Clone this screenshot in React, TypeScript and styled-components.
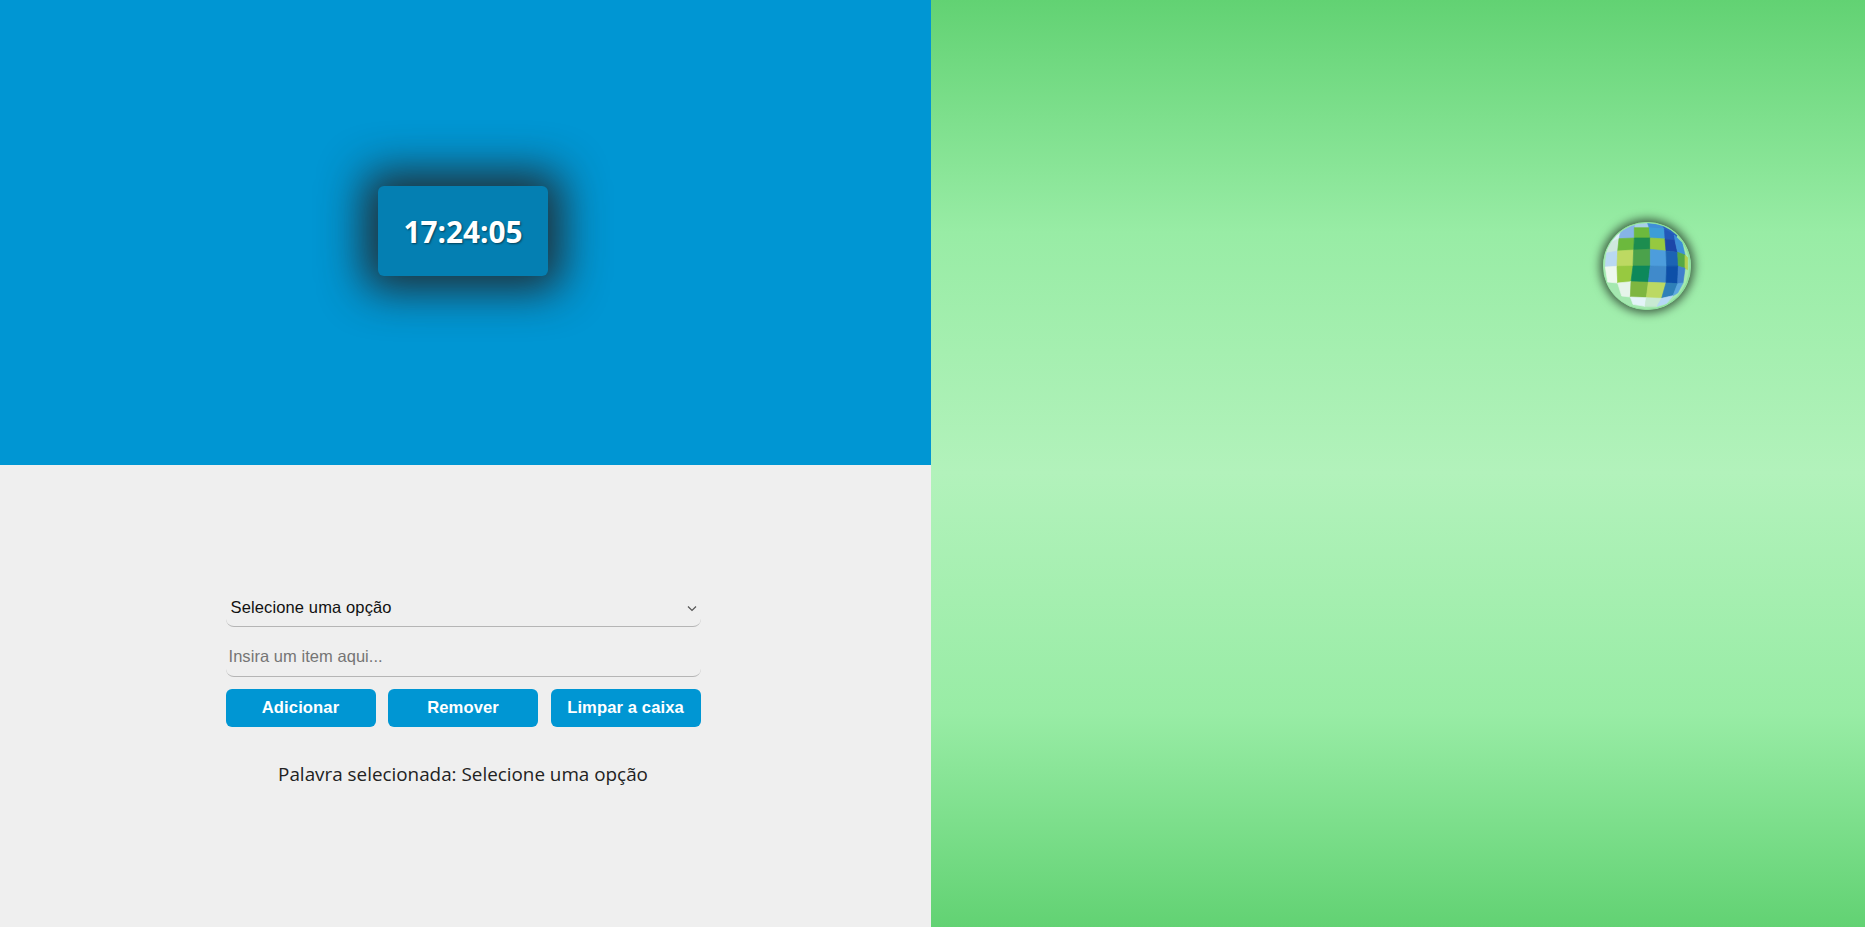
import React from "react";
import styled, { createGlobalStyle } from "styled-components";

const Global = createGlobalStyle`
  html, body { margin: 0; padding: 0; height: 100%; overflow: hidden; }
  #root { height: 100%; }
  * { box-sizing: border-box; }
`;
const Page = styled.div`
  display: grid;
  grid-template-columns: 931px 1fr;
  width: 1865px;
  height: 927px;
`;
const LeftColumn = styled.div`
  display: grid;
  grid-template-rows: 465px 1fr;
`;
const ClockPanel = styled.section`
  background: #0096d3;
  display: flex;
  align-items: center;
  justify-content: center;
  padding: 0 5px 3px 0;
`;
const ClockCard = styled.div`
  width: 170px;
  height: 90px;
  background: #047fb2;
  border-radius: 6px;
  box-shadow: 0 0 44px 14px rgba(34, 40, 44, 0.95);
  display: flex;
  align-items: center;
  justify-content: center;
  color: #fff;
  font: 700 29.8px "Open Sans", sans-serif;
  text-shadow: 1px 1px 2px rgba(0, 0, 0, 0.5);
`;
const FormPanel = styled.section`
  background: #efefef;
  display: flex;
  flex-direction: column;
  align-items: center;
  padding: 126px 5px 0 0;
`;
const Form = styled.div`
  width: 475px;
  display: flex;
  flex-direction: column;
`;
const SelectBox = styled.div`
  height: 36px;
  display: flex;
  align-items: center;
  justify-content: space-between;
  padding: 0 3px 2px 5px;
  border-bottom: 1px solid #b5b5b5;
  border-radius: 0 0 8px 8px;
  font: 16.5px "Liberation Sans", sans-serif;
  letter-spacing: 0.13px;
  color: #111;
`;
const TextField = styled.input`
  height: 40px;
  margin-top: 10px;
  padding: 0 3px 0 3px;
  border: 0;
  border-bottom: 1px solid #b5b5b5;
  border-radius: 0 0 8px 8px;
  background: transparent;
  font: 16.5px "Liberation Sans", sans-serif;
  letter-spacing: 0.05px;
  outline: none;
  &::placeholder { color: #757575; opacity: 1; }
`;
const ButtonRow = styled.div`
  display: grid;
  grid-template-columns: repeat(3, 150px);
  justify-content: space-between;
  margin-top: 12px;
`;
const ActionButton = styled.button`
  height: 38px;
  border: 0;
  border-radius: 6px;
  background: #0096d3;
  color: #fff;
  font: 700 16.6px "Liberation Sans", sans-serif;
  letter-spacing: 0.1px;
`;
const Selection = styled.p`
  margin: 34px 0 0;
  text-align: center;
  font: 18.85px "Open Sans", sans-serif;
  color: #222;
`;
const RightPanel = styled.section`
  background: linear-gradient(180deg, #62d273 0%, #98eca5 25%, #b2f2bb 51%, #98eca5 77%, #62d273 100%);
  display: flex;
  align-items: flex-start;
  justify-content: flex-end;
  padding: 222px 174px 0 0;
`;
const Globe = styled.svg`
  width: 88px;
  height: 88px;
  border-radius: 50%;
  box-shadow: 0 0 10px 3px rgba(0, 0, 0, 0.6);
`;

/* Quads in a 3x working space, the sphere being centred on (148,155). */
const cells: [string, string][] = [
  ["M110 30 L150 27 L155 42 L110 44Z", "#a8cfe8"],
  ["M150 27 L195 32 L200 44 L155 42Z", "#3f8fd8"],
  ["M195 32 L240 60 L232 76 L200 44Z", "#2a62c0"],
  ["M38 62 L70 46 L72 73 L34 88Z", "#e0effa"],
  ["M70 46 L110 32 L110 72 L64 74Z", "#86b4e6"],
  ["M110 40 L155 40 L158 72 L110 72Z", "#6cb93c"],
  ["M155 40 L200 44 L202 74 L158 72Z", "#3d9dd8"],
  ["M200 44 L230 62 L232 78 L202 74Z", "#2359b8"],
  ["M230 62 L252 84 L258 122 L232 78Z", "#3e8fd8"],
  ["M34 86 L64 73 L60 112 L26 118Z", "#cfe8dd"],
  ["M64 73 L110 71 L108 108 L60 111Z", "#6cb93c"],
  ["M110 71 L158 71 L158 106 L108 108Z", "#1f8d4f"],
  ["M158 71 L202 74 L205 110 L158 106Z", "#96c940"],
  ["M202 74 L232 78 L240 114 L205 110Z", "#1f46a8"],
  ["M232 78 L254 88 L262 122 L240 114Z", "#3e8fd8"],
  ["M26 116 L60 110 L58 156 L23 158Z", "#b9d8f2"],
  ["M60 110 L108 107 L106 155 L58 156Z", "#bdd962"],
  ["M108 107 L158 105 L158 155 L106 155Z", "#4ba24c"],
  ["M158 105 L205 110 L207 156 L158 155Z", "#4d9ddc"],
  ["M205 110 L240 114 L242 156 L207 156Z", "#1b64b4"],
  ["M240 114 L262 122 L262 162 L242 156Z", "#55a845"],
  ["M262 122 L270 130 L270 166 L262 162Z", "#b5d04f"],
  ["M23 158 L58 156 L60 206 L30 203Z", "#eef8ee"],
  ["M58 156 L106 155 L100 202 L60 206Z", "#97c93f"],
  ["M106 155 L158 155 L152 204 L100 202Z", "#11885a"],
  ["M158 155 L207 156 L205 206 L152 204Z", "#3f8acb"],
  ["M207 156 L242 156 L240 208 L205 206Z", "#0f4fa8"],
  ["M242 156 L262 162 L256 206 L240 208Z", "#3f7fcc"],
  ["M60 206 L100 202 L98 248 L72 245Z", "#e6f4ea"],
  ["M100 202 L152 204 L146 250 L98 248Z", "#7eb63f"],
  ["M152 204 L205 206 L192 252 L146 250Z", "#bcd962"],
  ["M205 206 L240 208 L226 244 L192 252Z", "#2e7fb8"],
  ["M240 208 L256 206 L240 236 L226 244Z", "#5ba6df"],
  ["M98 248 L146 250 L142 276 L106 270Z", "#e4f4f8"],
  ["M146 250 L192 252 L178 276 L142 276Z", "#c8ead2"],
  ["M192 252 L226 244 L206 268 L178 276Z", "#b5d8f5"],
];

export default function App() {
  return (
    <Page>
      <Global />
      <LeftColumn>
        <ClockPanel>
          <ClockCard>17:24:05</ClockCard>
        </ClockPanel>
        <FormPanel>
          <Form>
            <SelectBox>
              Selecione uma opção
              <svg width="12" height="12" viewBox="0 0 12 12" fill="none" stroke="#555" strokeWidth="1.2">
                <path d="M2 4.5 L6 8.5 L10 4.5" />
              </svg>
            </SelectBox>
            <TextField placeholder="Insira um item aqui..." />
            <ButtonRow>
              <ActionButton>Adicionar</ActionButton>
              <ActionButton>Remover</ActionButton>
              <ActionButton>Limpar a caixa</ActionButton>
            </ButtonRow>
            <Selection>Palavra selecionada: Selecione uma opção</Selection>
          </Form>
        </FormPanel>
      </LeftColumn>
      <RightPanel>
        <Globe viewBox="16 23 264 264">
          <defs>
            <clipPath id="ball">
              <circle cx="148" cy="155" r="129" />
            </clipPath>
            <filter id="soft">
              <feGaussianBlur stdDeviation="1.2" />
            </filter>
          </defs>
          <circle cx="148" cy="155" r="132" fill="#8fe09c" />
          <circle cx="146" cy="155" r="129" fill="#a5e8b0" />
          <g clipPath="url(#ball)">
            <g filter="url(#soft)">
              {cells.map(([d, fill]) => (
                <path key={d} d={d} fill={fill} stroke={fill} strokeWidth="2" strokeLinejoin="round" />
              ))}
            </g>
          </g>
        </Globe>
      </RightPanel>
    </Page>
  );
}
